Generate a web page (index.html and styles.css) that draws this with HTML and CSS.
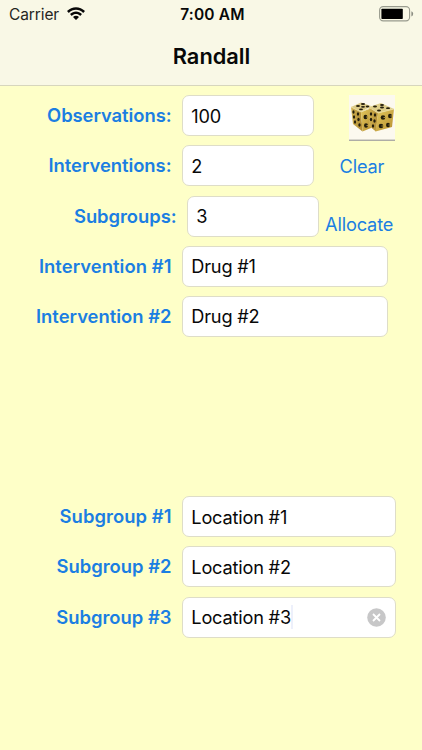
FILE: index.html
```
<!DOCTYPE html>
<html lang="en">
<head>
<meta charset="utf-8">
<title>Randall</title>
<link rel="stylesheet" href="styles.css">
</head>
<body>
<header class="header">
  <div class="status">
    <div class="carrier"><span>Carrier</span>
      <svg class="wifi" viewBox="0 0 18 13" width="18" height="13"><path d="M0 4.1C5-1.2 13-1.2 18 4.1L16.2 5.9C12.2 1.8 5.8 1.8 1.8 5.9ZM3 7.1C6.5 3.5 11.5 3.5 15 7.1L13.2 8.9C10.7 6.4 7.3 6.4 4.8 8.9ZM6 10.1C7.8 8.4 10.2 8.4 12 10.1L9 13Z"/></svg>
    </div>
    <time class="time">7:00 AM</time>
    <svg class="battery" viewBox="0 0 35 16" width="35" height="16"><rect x=".6" y=".6" width="30" height="14.3" rx="3.6" fill="none" stroke="#999b8e" stroke-width="1.1"/><rect x="2.4" y="2.7" width="21.4" height="10.3" rx=".7"/><path d="M32.4 5.2Q34.2 5.7 34.2 7.8T32.4 10.4Z" fill="#8b8d82"/></svg>
  </div>
  <h1 class="title">Randall</h1>
</header>
<main class="form">
  <div class="row"><label class="label">Observations:</label><div class="field short">100</div>
    <svg class="dice" viewBox="0 0 46 46" width="46" height="46">
      <defs>
        <linearGradient id="gold" x2="1" y2="1"><stop stop-color="#e3c85f"/><stop offset="1" stop-color="#b8902f"/></linearGradient>
        <linearGradient id="side" x2="1" y2="0"><stop stop-color="#cfb050"/><stop offset="1" stop-color="#b08c35"/></linearGradient>
      </defs>
      <rect width="46" height="46" fill="#fcf9ef"/>
      <path d="M0 45.2H46" stroke="#8c8b86" stroke-width="1"/>
      <path d="M2 12 12 7.5 22 11 12 17Z" fill="#dccb87"/>
      <path d="M2 12 12 17 13.5 36.5 4 29Z" fill="url(#side)"/>
      <path d="M12 17 23 13 22 33 13.5 36.5Z" fill="url(#gold)"/>
      <path d="M20 12 32 8 45 14 29 18Z" fill="#dfcf8b"/>
      <path d="M20 12 29 18 27 36.5 20 31Z" fill="url(#side)"/>
      <path d="M29 18 45 14 43 32 26.5 36.5Z" fill="url(#gold)"/>
      <path d="M2 12 12 17 21 13 29 18 45 14" fill="none" stroke="#eee0a4" stroke-width=".8"/>
      <g fill="#241e0c">
        <ellipse cx="14" cy="9" rx="2.1" ry=".9"/><ellipse cx="9" cy="11" rx="2" ry=".9"/><ellipse cx="14" cy="11.8" rx="2" ry=".9"/><ellipse cx="18.5" cy="11.5" rx="1.8" ry=".9"/><ellipse cx="12" cy="14.3" rx="2" ry=".9"/>
        <ellipse cx="33" cy="10" rx="2" ry=".9"/><ellipse cx="26" cy="11.5" rx="2" ry=".9"/><ellipse cx="33" cy="12.5" rx="2" ry=".9"/><ellipse cx="39" cy="13.2" rx="2" ry=".9"/><ellipse cx="30" cy="15.5" rx="2" ry=".9"/>
        <ellipse cx="4.5" cy="17" rx="1.1" ry="1.8"/><ellipse cx="9" cy="19" rx="1.2" ry="1.8"/><ellipse cx="5" cy="22" rx="1.1" ry="1.8"/><ellipse cx="9.5" cy="24.5" rx="1.2" ry="1.8"/><ellipse cx="6" cy="27" rx="1.1" ry="1.8"/><ellipse cx="10.5" cy="30" rx="1.2" ry="1.8"/>
        <ellipse cx="16.5" cy="22" rx="2" ry="2.3"/><ellipse cx="17" cy="30.500" rx="2" ry="2.3"/>
        <ellipse cx="22" cy="19" rx="1.2" ry="1.7"/><ellipse cx="26" cy="20" rx="1.2" ry="1.7"/><ellipse cx="22" cy="24.5" rx="1.2" ry="1.7"/><ellipse cx="25.5" cy="26" rx="1.2" ry="1.7"/><ellipse cx="24" cy="31" rx="1.2" ry="1.7"/>
        <ellipse cx="34" cy="22.500" rx="2.3" ry="2.2"/><ellipse cx="41" cy="21" rx="2" ry="2.2"/><ellipse cx="32" cy="31" rx="2.3" ry="2.2"/><ellipse cx="39" cy="30" rx="2" ry="2.2"/>
      </g>
      <path d="M17 22h2M17.5 30.5h2M34.500 22.5h2M41.500 21h2M32.500 31h2M39.500 30h2" stroke="#c9aa48" stroke-width=".8"/>
    </svg>
  </div>
  <div class="row"><label class="label interventions">Interventions:</label><div class="field short">2</div><a class="action clear">Clear</a></div>
  <div class="row"><label class="label subgroups">Subgroups:</label><div class="field short">3</div><a class="action allocate">Allocate</a></div>
  <div class="row"><label class="label numbered first">Intervention #1</label><div class="field medium">Drug #1</div></div>
  <div class="row"><label class="label numbered">Intervention #2</label><div class="field medium">Drug #2</div></div>
  <section class="groups">
    <div class="row"><label class="label numbered first">Subgroup #1</label><div class="field long">Location #1</div></div>
    <div class="row"><label class="label numbered">Subgroup #2</label><div class="field long">Location #2</div></div>
    <div class="row"><label class="label numbered">Subgroup #3</label><div class="field long">Location #3<span class="caret"></span>
      <svg class="delete" viewBox="0 0 19 19" width="19" height="19"><circle cx="9.5" cy="9.5" r="9.3" fill="#c7c7c8"/><path d="M6 6 13 13M13 6 6 13" stroke="#fff" stroke-width="1.8"/></svg>
    </div></div>
  </section>
</main>
</body>
</html>
```
FILE: styles.css
```
* { box-sizing: border-box; }
body {
  margin: 0;
  height: 750px;
  overflow: hidden;
  background: #feffc8;
  color: #080808;
  font-family: Inter, "Liberation Sans", sans-serif;
}
.header {
  height: 86px;
  background: #f9f8e6;
  border-bottom: 1px solid #d7d6bd;
}
.status {
  height: 28px;
  display: grid;
  grid-template-columns: 1fr auto 1fr;
  align-items: center;
  padding: 0 8px 0 9px;
  font-size: 15.5px;
}
.carrier { display: flex; align-items: center; gap: 8px; color: #252522; letter-spacing: -.1px; }
.wifi { fill: #080808; margin-top: -1px; }
.time { font-weight: 600; font-size: 15.5px; letter-spacing: .2px; padding-left: 2px; }
.battery { justify-self: end; }
.title {
  margin: 13px 0 0;
  padding-left: 1px;
  text-align: center;
  font-size: 21.8px;
  line-height: 30px;
  font-weight: 600;
}
.form { padding-top: 9.2px; }
.row { display: flex; height: 50.2px; align-items: flex-start; }
.label {
  width: 171.5px;
  margin-right: 10.5px;
  text-align: right;
  font-size: 18.4px;
  line-height: 41px;
  font-weight: 600;
  letter-spacing: -.05px;
  color: #1b7ee2;
}
.interventions { letter-spacing: -.03px; }
.numbered { letter-spacing: .01px; }
.first { letter-spacing: .06px; }
.subgroups { width: 176.5px; line-height: 40px; }
.field {
  display: flex;
  align-items: center;
  height: 41px;
  padding: 0 9px 0 8.3px;
  border: 1px solid #deddc8;
  border-radius: 7px;
  background: #fff;
  font-size: 18.2px;
  letter-spacing: -.2px;
}
.short { width: 132px; }
.medium { width: 206px; }
.long { width: 214px; }
.dice { margin-left: 35px; }
.action { color: #1b7ee2; font-size: 18.2px; line-height: 42px; letter-spacing: -.15px; }
.clear { margin-left: 25.5px; }
.allocate { margin-left: 6px; padding-top: 7px; }
.groups { padding-top: 150px; }
.caret { width: 2px; height: 24px; background: #edf0fb; }
.delete { margin: 0 0 0 auto; }
```
